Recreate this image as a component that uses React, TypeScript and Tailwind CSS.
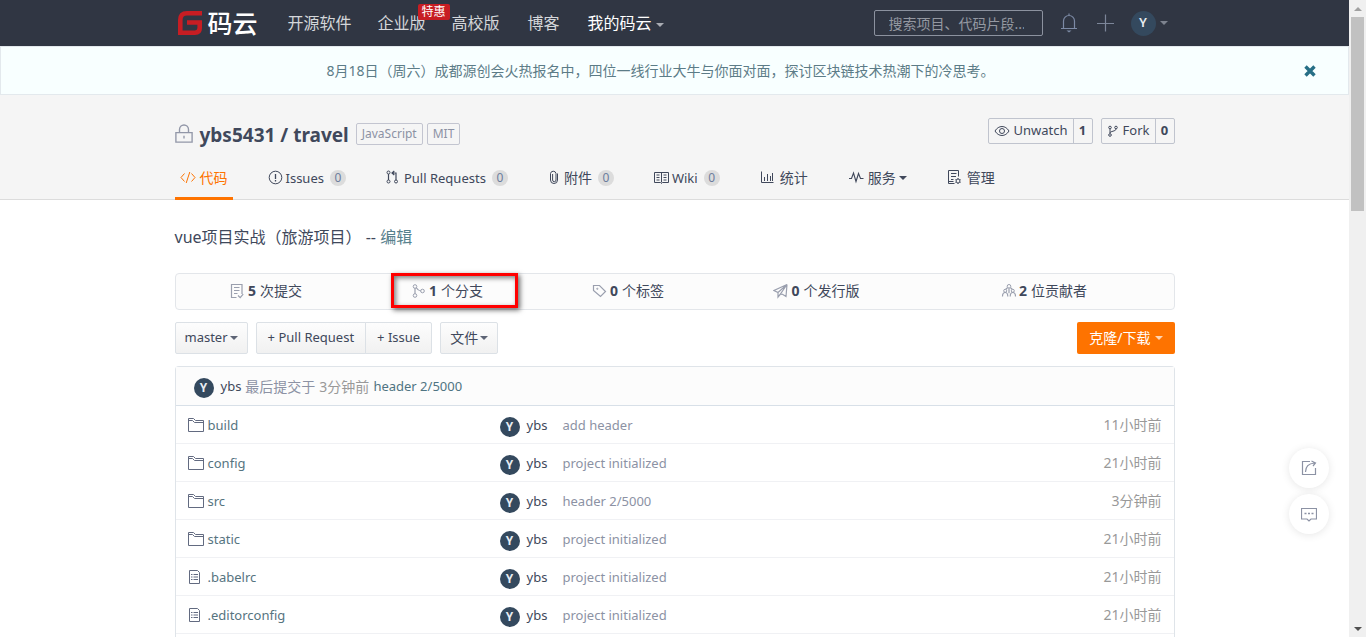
import type { ReactNode } from 'react';

type IconProps = { className?: string };

function Icon({ className, box = 16, children }: IconProps & { box?: number; children: ReactNode }) {
  return (
    <svg
      viewBox={`0 0 ${box} ${box}`}
      className={className}
      fill="none"
      stroke="currentColor"
      strokeWidth="1"
      aria-hidden="true"
    >
      {children}
    </svg>
  );
}

function Caret({ className }: IconProps) {
  return (
    <svg viewBox="0 0 8 4" className={`h-1 w-2 shrink-0 ${className ?? ''}`} fill="currentColor" aria-hidden="true">
      <path d="M0 0h8L4 4z" />
    </svg>
  );
}

const CodeIcon = () => (
  <Icon className="h-4 w-4">
    <path d="M4.5 3.5 1 7.5l3.5 4M11.5 3.5 15 7.500l-3.500 4M9.800 2 6.200 13" />
  </Icon>
);

const IssueIcon = () => (
  <Icon className="h-4 w-4">
    <circle cx="7.5" cy="7.5" r="6.3" />
    <path d="M7.5 4v5M7.5 10v1.5" strokeWidth="1.3" />
  </Icon>
);

const PullIcon = () => (
  <Icon className="h-4 w-4">
    <circle cx="2.5" cy="2.5" r="1.5" />
    <circle cx="2.5" cy="11.5" r="1.5" />
    <circle cx="10" cy="11.5" r="1.5" />
    <path d="M2.5 4v6M10 10V3H6.5M8.300 1 6 3l2.300 2" strokeWidth="1.2" />
  </Icon>
);

const ClipIcon = () => (
  <svg viewBox="0 0 12 16" className="h-4 w-3" fill="none" stroke="currentColor" aria-hidden="true">
    <path d="M9.500 3.500V10a3.500 3.500 0 0 1-7 0V3.500a2.800 2.800 0 0 1 5.500 0V10a1.700 1.700 0 0 1-3.400 0V4" />
  </svg>
);

const WikiIcon = () => (
  <Icon className="h-4 w-4">
    <path d="M.5 2.500h14v10H8.500l-1 1-1-1h-6zM7.500 2.500v10M2.500 5h3M2.500 7.500h3M2.500 10h3M9.500 5h3M9.500 7.500h3M9.500 10h3" />
  </Icon>
);

const ChartIcon = () => (
  <Icon className="h-4 w-4">
    <path d="M1.500 1.500v11h12M4.500 7v4M7.500 4v7M10.500 6v5M12.500 3v8" />
  </Icon>
);

const PulseIcon = () => (
  <Icon className="h-4 w-4">
    <path d="M1 8.500h2.500L5.500 3l2.500 8.500 2.500-8 2 5h3" strokeWidth="1.100" />
  </Icon>
);

const ManageIcon = () => (
  <Icon className="h-4 w-4">
    <path d="M7.500 13.500H1.500v-13h10v6M4 3.500h5.500M4 6.500h5M4 9.500h2.500M1.500 11.500h5" />
    <circle cx="11" cy="11" r="2" />
    <path d="M11 8v1M11 13v1M8.500 9.500l.8.500M12.700 12l.8.500M8.500 12.500l.8-.5M12.700 10l.8-.5" />
  </Icon>
);

const CommitIcon = () => (
  <Icon className="h-4 w-4">
    <path d="M12 11V1.500H1.500v13h5M4 4.500h5.500M4 7.500h5.500M4 10.500h3.500M8 12.500l2.200 2.200 3-3.500" strokeWidth="1.2" />
  </Icon>
);

const BranchIcon = () => (
  <Icon className="h-4 w-4">
    <circle cx="4" cy="3.500" r="1.800" />
    <circle cx="4" cy="12.500" r="1.800" />
    <circle cx="11.500" cy="8" r="1.800" />
    <path d="M4 5.200v5.600M5.300 4.800c1.200 2 2.500 3 4.500 3.200" strokeWidth="1.2" />
  </Icon>
);

const TagIcon = () => (
  <Icon className="h-4 w-4">
    <path d="M1.500 2.500H7.500l6 6L8.500 13.500l-7-6z" strokeWidth="1.2" />
    <circle cx="5.300" cy="5.800" r=".6" />
  </Icon>
);

const PlaneIcon = () => (
  <Icon className="h-4 w-4">
    <path d="M14 1.500 1 7.500l4 2zM14 1.500l-1 12-4-2.500M5 9.500v4.500l2.500-3M14 1.500 7.500 11l1.500.5" strokeWidth="1.2" />
  </Icon>
);

const PeopleIcon = () => (
  <Icon className="h-4 w-4">
    <circle cx="8" cy="3.300" r="1.800" />
    <circle cx="4.200" cy="7.800" r="1.500" />
    <circle cx="11.800" cy="7.800" r="1.500" />
    <path
      d="M6.500 4.800 4.800 6.300M9.500 4.800l1.700 1.500M1.500 13.500c0-2.500 1-4 2.700-4s2.600 1.500 2.600 4M9.200 13.500c0-2.500 1-4 2.600-4s2.700 1.500 2.700 4M8 5.200v5"
      strokeWidth="1.2"
    />
  </Icon>
);

const FolderIcon = () => (
  <Icon className="h-4 w-4">
    <path d="M.5 14.500v-13h5l2 2h8v11zM.5 3.500h4l2 2h9" />
  </Icon>
);

const FileIcon = () => (
  <Icon className="h-4 w-4">
    <path d="M1.500 1.500h8l2 2v11h-10zM3 5.500h1.500M5.500 5.500h4.500M3 8h1.500M5.500 8h4.500M3 10.500h1.500M5.500 10.500h4.500" />
  </Icon>
);

function Avatar({ className }: IconProps) {
  return (
    <span
      className={`flex shrink-0 items-center justify-center rounded-full bg-[#34495e] font-['Roboto','Noto_Sans',sans-serif] text-[#e8edf2] ${className ?? ''}`}
    >
      Y
    </span>
  );
}

type Tab = { label: string; icon: ReactNode; count?: number; active?: boolean; caret?: boolean; latin?: boolean };

const tabs: Tab[] = [
  { label: '代码', icon: <CodeIcon />, active: true },
  { label: 'Issues', icon: <IssueIcon />, count: 0, latin: true },
  { label: 'Pull Requests', icon: <PullIcon />, count: 0, latin: true },
  { label: '附件', icon: <ClipIcon />, count: 0 },
  { label: 'Wiki', icon: <WikiIcon />, count: 0, latin: true },
  { label: '统计', icon: <ChartIcon /> },
  { label: '服务', icon: <PulseIcon />, caret: true },
  { label: '管理', icon: <ManageIcon /> },
];

const stats = [
  { value: 5, label: '次提交', icon: <CommitIcon /> },
  { value: 1, label: '个分支', icon: <BranchIcon />, marked: true },
  { value: 0, label: '个标签', icon: <TagIcon /> },
  { value: 0, label: '个发行版', icon: <PlaneIcon /> },
  { value: 2, label: '位贡献者', icon: <PeopleIcon /> },
];

const files = [
  { name: 'build', dir: true, message: 'add header', time: '11小时前' },
  { name: 'config', dir: true, message: 'project initialized', time: '21小时前' },
  { name: 'src', dir: true, message: 'header 2/5000', time: '3分钟前' },
  { name: 'static', dir: true, message: 'project initialized', time: '21小时前' },
  { name: '.babelrc', dir: false, message: 'project initialized', time: '21小时前' },
  { name: '.editorconfig', dir: false, message: 'project initialized', time: '21小时前' },
];

function TopNav() {
  return (
    <header className="bg-[#303643]">
      <div className="mx-auto flex h-[46px] max-w-[1000px] items-center">
        <a href="#" className="flex items-center pl-[3px]">
          <svg viewBox="0 0 24 24" className="h-6 w-6" fill="none" stroke="#c71d23" strokeWidth="4.6" aria-hidden="true">
            <path d="M24 2.300H9Q2.300 2.300 2.300 9v12.700H17q4.700 0 4.700-4.700v-5.500H9" />
          </svg>
          <span className="ml-[6px] text-[25px] leading-none font-medium text-white">码云</span>
        </a>
        <nav className="ml-[30px] flex items-center gap-[26px] text-base text-[#d4d6da]">
          <a href="#">开源软件</a>
          <a href="#" className="relative">
            企业版
            <span className="absolute -top-[7px] left-10 rounded-xs bg-[#c71d23] px-1 text-xs leading-4 whitespace-nowrap text-white">
              特惠
            </span>
          </a>
          <a href="#">高校版</a>
          <a href="#" className="mx-[2px]">
            博客
          </a>
          <button type="button" className="flex items-center gap-1 text-white">
            我的码云
            <Caret className="mt-1 text-[#a9acb3]" />
          </button>
        </nav>
        <input
          type="search"
          aria-label="搜索"
          placeholder="搜索项目、代码片段..."
          className="ml-auto h-[26px] w-[169px] rounded-xs border border-[#8c929f] bg-transparent pr-1 pl-[14px] text-sm text-white placeholder:text-[#9498a1]"
        />
        <button type="button" aria-label="通知" className="ml-4 text-[#7c8aa5]">
          <Icon className="h-5 w-5" box={20}>
            <path d="M2 15.500h16M4.500 15.500V8a5.500 5.500 0 0 1 11 0v7.500M10 .5v2" strokeWidth="1.2" />
            <path d="M7.500 17.500h5L10 19.500z" fill="currentColor" stroke="none" />
          </Icon>
        </button>
        <button type="button" aria-label="新建" className="ml-4 text-[#7c8699]">
          <Icon className="h-5 w-5" box={20}>
            <path d="M10.500 1.500v17M2 10.500h17" strokeWidth="1.2" />
          </Icon>
        </button>
        <button type="button" aria-label="账户" className="mr-[7px] ml-4 flex items-center gap-1">
          <Avatar className="h-[25px] w-[25px] text-[13px] font-medium" />
          <Caret className="text-[#7d838f]" />
        </button>
      </div>
    </header>
  );
}

function Notice() {
  return (
    <div className="flex h-[49px] items-center border border-[#e3e9ed] bg-[#f8ffff] text-sm text-[#5c7c87]">
      <p className="flex-1 pl-4 text-center">
        8月18日（周六）成都源创会火热报名中，四位一线行业大牛与你面对面，探讨区块链技术热潮下的冷思考。
      </p>
      <button type="button" aria-label="关闭" className="mr-8 text-[#276f86]">
        <svg viewBox="0 0 12 12" className="h-3 w-3" stroke="currentColor" strokeWidth="3.4" aria-hidden="true">
          <path d="M1.500 1.500l9 9M10.500 1.500l-9 9" />
        </svg>
      </button>
    </div>
  );
}

function CountButton({ icon, label, count }: { icon: ReactNode; label: string; count: number }) {
  return (
    <div className="flex h-[26px] items-stretch rounded-xs border border-[#c0c4ce] text-[13px]">
      <button type="button" className="flex items-center gap-1 px-[5px]">
        {icon}
        {label}
      </button>
      <a href="#" className="flex w-[19px] items-center justify-center border-l border-[#c0c4ce] font-bold">
        {count}
      </a>
    </div>
  );
}

function RepoHeader() {
  return (
    <section className="border-b border-[#dcdcdc] bg-[#f5f5f5]">
      <div className="mx-auto max-w-[1000px]">
        <div className="flex items-start pt-[23px]">
          <div className="flex h-8 items-center">
            <Icon className="h-5 w-[18px] text-[#9297a8]" box={20}>
              <path d="M1 8.500h18v10.500H1zM5 8.500V5a5 5 0 0 1 10 0v3.500M10 12v3" strokeWidth="1.5" />
            </Icon>
            <h1 className="ml-[7px] pt-[2px] text-[19px] font-bold">
              <a href="#">ybs5431</a> / <a href="#">travel</a>
            </h1>
            <span className="ml-[7px] flex h-[22px] items-center rounded-xs border border-[#c3c5d0] px-[5px] text-xs text-[#8c92a4]">
              JavaScript
            </span>
            <span className="ml-1 flex h-[22px] items-center rounded-xs border border-[#c3c5d0] px-[5px] text-xs text-[#8c92a4]">
              MIT
            </span>
          </div>
          <div className="ml-auto flex gap-2">
            <CountButton
              label="Unwatch"
              count={1}
              icon={
                <Icon className="h-4 w-4">
                  <path d="M1 8c3.500-6 10.500-6 14 0-3.500 6-10.500 6-14 0z" />
                  <circle cx="8" cy="8" r="2.5" />
                </Icon>
              }
            />
            <CountButton
              label="Fork"
              count={0}
              icon={
                <Icon className="h-3 w-3" box={12}>
                  <circle cx="3" cy="2.500" r="1.300" />
                  <circle cx="3" cy="10" r="1.300" />
                  <circle cx="9" cy="2.500" r="1.300" />
                  <path d="M3 4v4.500M9 4c0 2.500-6 2-6 4" />
                </Icon>
              }
            />
          </div>
        </div>
        <nav className="mt-1 -mb-px flex gap-[30px] text-sm">
          {tabs.map((tab) => (
            <a
              key={tab.label}
              href="#"
              className={`flex h-[46px] items-center px-[5px] ${
                tab.active ? 'border-b-3 border-[#fe7300] pt-[5px] text-[#fe7300]' : 'pt-[2px]'
              }`}
            >
              {tab.icon}
              <span className={tab.latin ? 'ml-[2px] text-[13px]' : 'ml-1'}>{tab.label}</span>
              {tab.count !== undefined && (
                <span className="ml-[6px] flex h-4 w-4 items-center justify-center rounded-full bg-[#dcdcdc] text-xs text-[#6c7d9c]">
                  {tab.count}
                </span>
              )}
              {tab.caret && <Caret className="ml-[3px]" />}
            </a>
          ))}
        </nav>
      </div>
    </section>
  );
}

const plainButton =
  'flex h-8 items-center gap-[2px] border border-[#dce1e6] bg-linear-to-b from-[#fdfdfd] to-[#f1f1f1] text-[13px]';

function Toolbar() {
  return (
    <div className="mt-3 flex">
      <button type="button" className={`${plainButton} rounded-xs px-[9px]`}>
        master
        <Caret className="text-[#5d6475]" />
      </button>
      <div className="ml-2 flex">
        <button type="button" className={`${plainButton} rounded-l-xs px-[11px]`}>
          + Pull Request
        </button>
        <button type="button" className={`${plainButton} -ml-px rounded-r-xs px-[11px]`}>
          + Issue
        </button>
      </div>
      <button type="button" className={`${plainButton} ml-2 rounded-xs px-[9px]`}>
        <span className="text-sm">文件</span>
        <Caret className="text-[#5d6475]" />
      </button>
      <button
        type="button"
        className="ml-auto flex h-8 items-center gap-1 rounded-xs bg-[#fe7300] px-3 text-sm text-white"
      >
        克隆/下载
        <Caret className="text-[#ffd5b3]" />
      </button>
    </div>
  );
}

function FileList() {
  return (
    <div className="mt-3 grow rounded-t-sm border border-b-0 border-[#dfe4e9]">
      <div className="flex h-[39px] items-center border-b border-[#d8e0e8] bg-[#fcfcfc] pt-px pl-[18px] text-[13px]">
        <Avatar className="mt-[3px] h-5 w-5 text-xs font-bold" />
        <a href="#" className="ml-[7px]">
          ybs
        </a>
        <span className="ml-1 text-sm text-[#8c92a4]">最后提交于</span>
        <span className="ml-1 text-sm text-[#999999]">3分钟前</span>
        <a href="#" className="ml-1 text-[#4f7482]">
          header 2/5000
        </a>
      </div>
      <table className="w-full table-fixed border-separate border-spacing-0 text-[13px]">
        <tbody className="[&_td]:h-[38px] [&_td]:border-b [&_td]:border-[#f0f1f4] [&_td]:p-0">
          {files.map((file) => (
            <tr key={file.name}>
              <td className="w-[324px]">
                <a href="#" className="flex items-center pt-[2px] pl-3 text-[#56747f]">
                  <span className="mr-1 mb-[2px] text-[#626a80]">{file.dir ? <FolderIcon /> : <FileIcon />}</span>
                  {file.name}
                </a>
              </td>
              <td className="w-[63px]">
                <a href="#" className="flex items-center gap-[7px] pt-[2px]">
                  <Avatar className="mt-[2px] h-5 w-5 text-xs font-bold" />
                  ybs
                </a>
              </td>
              <td className="text-[#8c92a4]">
                <p className="pt-[2px]">{file.message}</p>
              </td>
              <td className="w-[120px] text-right text-sm text-[#999999]">
                <time className="mr-3">{file.time}</time>
              </td>
            </tr>
          ))}
        </tbody>
      </table>
    </div>
  );
}

function FloatingActions() {
  return (
    <div className="absolute right-5 bottom-[103px] flex flex-col gap-[6px] text-[#8c92a4]">
      <button
        type="button"
        aria-label="分享"
        className="flex h-10 w-10 items-center justify-center rounded-full bg-white shadow-[0_1px_8px_rgba(0,0,0,0.1)]"
      >
        <Icon className="h-4 w-4">
          <path d="M9 1.500H1.500v13h13V8M4.500 12c0-5 3-8.500 9-9M10.500 1l4 2-2.500 3" strokeWidth="1.2" />
        </Icon>
      </button>
      <button
        type="button"
        aria-label="反馈"
        className="flex h-10 w-10 items-center justify-center rounded-full bg-white shadow-[0_1px_8px_rgba(0,0,0,0.1)]"
      >
        <Icon className="h-4 w-4">
          <path d="M.5 2.500h15v10.500H10l-2 2-2-2H.5z" strokeWidth="1.2" />
          <path d="M3.500 7.500h2M7 7.500h2M10.500 7.500h2" strokeWidth="1.5" />
        </Icon>
      </button>
    </div>
  );
}

function ScrollTrack() {
  return (
    <div className="flex w-[17px] shrink-0 flex-col items-center bg-[#f0f0f0]" aria-hidden="true">
      <div className="flex h-[17px] items-center">
        <Caret className="rotate-180 text-[#a0a0a0]" />
      </div>
      <div className="h-[194px] w-[13px] bg-[#c1c1c1]" />
      <div className="mt-auto flex h-[17px] items-center">
        <Caret className="text-[#505050]" />
      </div>
    </div>
  );
}

export default function App() {
  return (
    <div className="flex h-screen overflow-hidden bg-white font-['Noto_Sans','Noto_Sans_CJK_SC',sans-serif] text-[#40485b]">
      <div className="relative flex min-w-0 flex-1 flex-col overflow-hidden">
        <TopNav />
        <Notice />
        <RepoHeader />
        <main className="mx-auto flex w-full max-w-[1000px] grow flex-col">
          <p className="mt-[25px] text-base">
            vue项目实战（旅游项目） --{' '}
            <a href="#" className="text-[#56808c]">
              编辑
            </a>
          </p>
          <div className="mt-6 grid h-[37px] grid-cols-[181fr_181fr_181fr_196fr_259fr] rounded-sm border border-[#e3e6ea] bg-[#fcfcfc] text-sm">
            {stats.map((stat) => (
              <a key={stat.label} href="#" className="relative flex items-center justify-center pb-px">
                <span className="mr-[2px] text-[#9a9fae]">{stat.icon}</span>
                <b className="mr-1">{stat.value}</b>
                {stat.label}
                {stat.marked && (
                  <span className="absolute -top-px right-5 bottom-px left-[34px] border-3 border-[#ff0000] shadow-[2px_2px_5px_rgba(0,0,0,0.6),inset_2px_2px_5px_rgba(0,0,0,0.5)]" />
                )}
              </a>
            ))}
          </div>
          <Toolbar />
          <FileList />
        </main>
        <FloatingActions />
      </div>
      <ScrollTrack />
    </div>
  );
}
